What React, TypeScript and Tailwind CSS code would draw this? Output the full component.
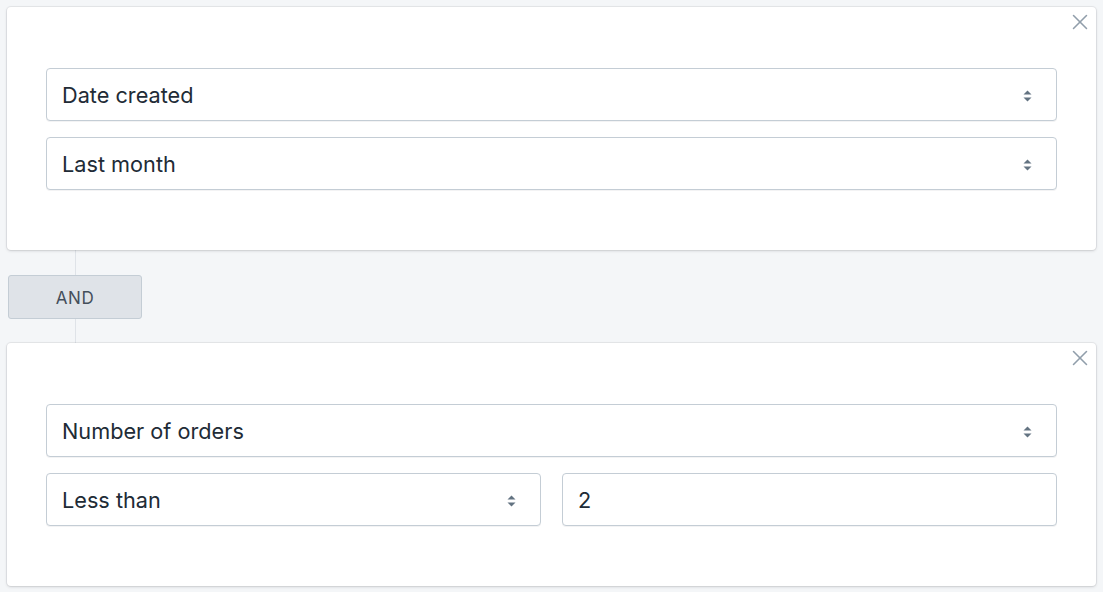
import { X } from 'lucide-react'

const font = { fontFamily: 'Inter, "Noto Sans", sans-serif' }

function Arrows() {
  return (
    <svg width={9} height={14} viewBox="0 0 9 14" className="shrink-0 text-[#637381]" fill="currentColor">
      <path d="M4.5 1.5 L8.5 5.5 L0.5 5.5 Z" />
      <path d="M4.5 12.5 L8.5 8.5 L0.5 8.5 Z" />
    </svg>
  )
}

function Select({ label }: { label: string }) {
  return (
    <div className="flex h-[53px] items-center justify-between rounded-[4px] border border-[#c4cdd5] bg-white pl-[15px] pr-[24px] pt-[2px] shadow-[0_1px_0_0_rgba(22,29,37,0.05)]">
      <span className="text-[21.7px] text-[#212b36]">{label}</span>
      <Arrows />
    </div>
  )
}

function Card({ children }: { children: React.ReactNode }) {
  return (
    <div className="relative rounded-[4px] bg-white px-[39px] pb-[60px] pt-[61px] shadow-[0_0_0_1px_rgba(63,63,68,0.07),0_1px_3px_0_rgba(63,63,68,0.18)]">
      <button type="button" className="absolute right-[3px] top-[2px] text-[#919eab]">
        <X size={26} strokeWidth={1.4} />
      </button>
      {children}
    </div>
  )
}

export default function App() {
  return (
    <div style={font} className="min-h-[592px] bg-[#f4f6f8] px-[7px] pt-[7px]">
      <Card>
        <div className="flex flex-col gap-4">
          <Select label="Date created" />
          <Select label="Last month" />
        </div>
      </Card>

      <div className="ml-px flex w-[134px] flex-col items-center">
        <div className="h-[25px] w-px bg-[#dfe3e8]" />
        <button
          type="button"
          className="flex h-[44px] w-full items-center justify-center rounded-[3px] border border-[#c4cdd5] bg-[#dfe3e8] pt-[3px] text-[17px] tracking-[0.5px] text-[#454f5b]"
        >
          AND
        </button>
        <div className="h-[24px] w-px bg-[#dfe3e8]" />
      </div>

      <Card>
        <div className="flex flex-col gap-4">
          <Select label="Number of orders" />
          <div className="grid grid-cols-2 gap-[21px]">
            <Select label="Less than" />
            <div className="flex h-[53px] items-center rounded-[4px] border border-[#c4cdd5] bg-white px-[15px] pt-[2px] shadow-[0_1px_0_0_rgba(22,29,37,0.05)]">
              <span className="text-[21.7px] text-[#212b36]">2</span>
            </div>
          </div>
        </div>
      </Card>
    </div>
  )
}
